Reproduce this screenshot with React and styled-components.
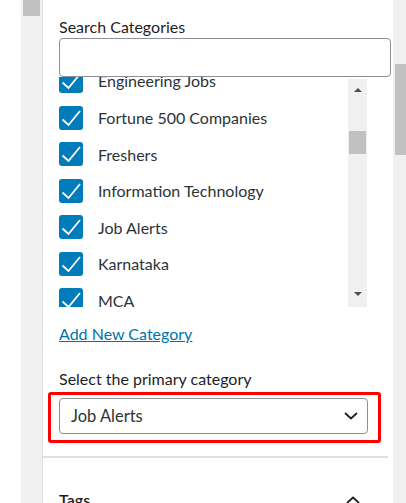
import React from 'react';
import styled, { createGlobalStyle } from 'styled-components';

const GlobalStyle = createGlobalStyle`
  html, body {
    margin: 0;
    padding: 0;
    background: #fff;
  }
  body {
    font-family: Lato, "Noto Sans", sans-serif;
    color: #1e1e1e;
  }
  * {
    box-sizing: border-box;
  }
`;

const Page = styled.div`
  display: flex;
  height: 503px;
  padding-left: 21px;
  overflow: hidden;
`;

const ScrollTrack = styled.div`
  flex: none;
  width: ${(p) => p.$width}px;
  background: #f0f0f0;
  padding-left: 2px;
  padding-right: ${(p) => p.$padRight}px;
`;

const ScrollThumb = styled.div`
  background: #c1c1c1;
  margin-top: ${(p) => p.$top}px;
  height: ${(p) => p.$height}px;
`;

const Panel = styled.div`
  flex: 1;
  min-width: 0;
  border-left: 1px solid #e0e0e0;
  padding: 17px 25px 0 16px;
  display: flex;
  flex-direction: column;
`;

const FieldLabel = styled.label`
  display: block;
  font-size: 16px;
  line-height: 20px;
  color: #1e1e1e;
  margin-top: ${(p) => p.$top || 0}px;
`;

const SearchInput = styled.input`
  display: block;
  appearance: none;
  -webkit-appearance: none;
  flex: none;
  height: 39px;
  margin: 1px -23px 0 0;
  padding: 0 8px;
  border: 1px solid #8c8f94;
  border-radius: 4px;
  background: #fff;
  font: inherit;
  outline: none;
`;

const CategoryBox = styled.div`
  display: flex;
  flex: none;
  height: 230px;
  overflow: hidden;
`;

const CategoryList = styled.ul`
  flex: 1;
  list-style: none;
  margin: -14.4px 0 0;
  padding: 0;
`;

const CategoryRow = styled.li`
  display: flex;
  align-items: center;
  gap: 15px;
  height: 36.6px;
  font-size: 16px;
  color: #2c3338;
`;

const CheckBox = styled.span`
  flex: none;
  width: 24px;
  height: 24px;
  border-radius: 3px;
  background: #007cba;
  display: flex;
  svg {
    display: block;
  }
`;

const ListScrollbar = styled.div`
  flex: none;
  width: 19px;
  margin: 2px 1px 0 0;
  background: #f0f0f0;
  display: flex;
  flex-direction: column;
  align-items: center;
  padding: 9px 0 11px;
`;

const Arrow = styled.span`
  width: 0;
  height: 0;
  border-left: 4.5px solid transparent;
  border-right: 4.5px solid transparent;
  ${(p) => (p.$down ? 'border-top' : 'border-bottom')}: 4px solid #505050;
  margin-top: ${(p) => (p.$down ? 'auto' : '0')};
`;

const ListThumb = styled.span`
  width: 17px;
  height: 23px;
  margin-top: 39px;
  background: #c1c1c1;
`;

const AddLink = styled.a`
  display: block;
  margin-top: 17px;
  font-size: 16px;
  line-height: 20px;
  color: #0073aa;
  text-decoration: underline;
  align-self: flex-start;
`;

const Highlight = styled.div`
  flex: none;
  margin: 3px -13px 0 -11px;
  padding: 3px 10px 6px 8px;
  border: 3px solid #ff0000;
  border-radius: 3px;
`;

const SelectBox = styled.div`
  display: flex;
  align-items: center;
  justify-content: space-between;
  height: 36px;
  padding: 0 9px 0 11px;
  border: 1px solid #8c8f94;
  border-radius: 4px;
  font-size: 16.5px;
  color: #2c3338;
`;

const Divider = styled.hr`
  flex: none;
  margin: 13px -20px 0 -16px;
  border: none;
  height: 2px;
  background: #e0e0e0;
`;

const SectionHeader = styled.div`
  display: flex;
  justify-content: space-between;
  align-items: center;
  margin-top: 32px;
  padding-right: 8px;
  font-size: 16px;
  line-height: 20px;
  font-weight: 600;
`;

const Check = () => (
  <svg width="24" height="24" viewBox="0 0 24 24">
    <polyline points="3.5,13.5 9.5,19 21,5" fill="none" stroke="#fff" strokeWidth="1.8" />
  </svg>
);

const Chevron = ({ up }) => (
  <svg width="14" height="8" viewBox="0 0 14 8">
    <polyline
      points={up ? '1,7 7,1.5 13,7' : '1,1 7,6.5 13,1'}
      fill="none"
      stroke="#1e1e1e"
      strokeWidth="1.8"
    />
  </svg>
);

const categories = [
  'Engineering Jobs',
  'Fortune 500 Companies',
  'Freshers',
  'Information Technology',
  'Job Alerts',
  'Karnataka',
  'MCA',
];

export default function App() {
  return (
    <>
      <GlobalStyle />
      <Page>
        <ScrollTrack $width={21} $padRight={2}>
          <ScrollThumb $top={0} $height={16} />
        </ScrollTrack>
        <Panel>
          <FieldLabel>Search Categories</FieldLabel>
          <SearchInput type="text" />
          <CategoryBox>
            <CategoryList>
              {categories.map((name) => (
                <CategoryRow key={name}>
                  <CheckBox>
                    <Check />
                  </CheckBox>
                  {name}
                </CategoryRow>
              ))}
            </CategoryList>
            <ListScrollbar>
              <Arrow />
              <ListThumb />
              <Arrow $down />
            </ListScrollbar>
          </CategoryBox>
          <AddLink href="#">Add New Category</AddLink>
          <FieldLabel $top={25}>Select the primary category</FieldLabel>
          <Highlight>
            <SelectBox>
              Job Alerts
              <Chevron />
            </SelectBox>
          </Highlight>
          <Divider />
          <SectionHeader>
            Tags
            <Chevron up />
          </SectionHeader>
        </Panel>
        <ScrollTrack $width={13} $padRight={0}>
          <ScrollThumb $top={64} $height={91} />
        </ScrollTrack>
      </Page>
    </>
  );
}
